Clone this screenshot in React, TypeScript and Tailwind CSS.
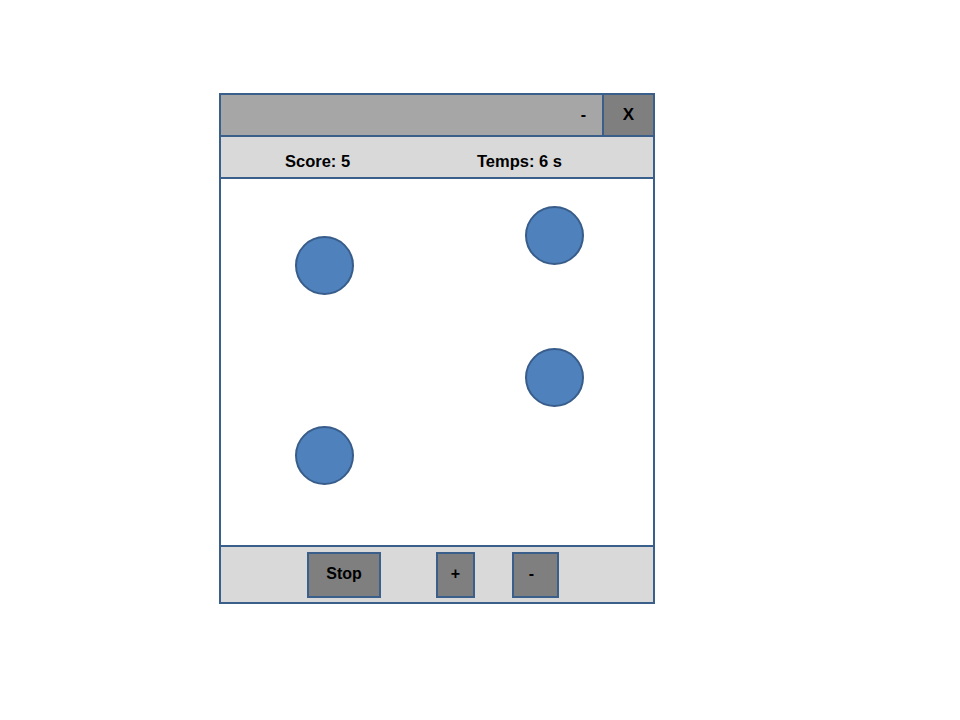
import React from "react";

const circles = [
  { left: 74, top: 57 },
  { left: 304, top: 27 },
  { left: 304, top: 169 },
  { left: 74, top: 247 },
];

export default function App() {
  return (
    <div className="w-[960px] h-[720px] bg-white" style={{ fontFamily: '"Liberation Sans", Arial, sans-serif' }}>
      <div className="pt-[93px] pl-[219px]">
        <div className="w-[436px] border-2 border-[#3a5f8b] flex flex-col font-bold text-[16px] text-black">
          <div className="h-[42px] flex bg-[#a6a6a6] border-b-2 border-[#3a5f8b]">
            <div className="flex-1 flex items-center justify-end pr-[16px]">-</div>
            <div className="w-[51px] bg-[#7f7f7f] border-l-2 border-[#3a5f8b] flex items-center justify-center text-[17px]">X</div>
          </div>
          <div className="h-[42px] flex items-center bg-[#d9d9d9] border-b-2 border-[#3a5f8b] pl-[64px] pt-[8px] text-[16.5px]">
            <span className="w-[192px]">Score: 5</span>
            <span>Temps: 6 s</span>
          </div>
          <div className="relative h-[368px] bg-white border-b-2 border-[#3a5f8b]">
            {circles.map((c, i) => (
              <div
                key={i}
                className="absolute w-[59px] h-[59px] rounded-full bg-[#4f81bd] border-2 border-[#385d8a]"
                style={{ left: c.left, top: c.top }}
              />
            ))}
          </div>
          <div className="h-[55px] bg-[#d9d9d9] flex items-start pt-[5px] pl-[86px]">
            <button className="w-[74px] h-[46px] bg-[#7f7f7f] border-2 border-[#3a5f8b] font-bold text-[16px] pb-[2px]">Stop</button>
            <button className="ml-[55px] w-[39px] h-[46px] bg-[#7f7f7f] border-2 border-[#3a5f8b] font-bold text-[16px] pb-[2px]">+</button>
            <button className="ml-[37px] w-[47px] h-[46px] bg-[#7f7f7f] border-2 border-[#3a5f8b] font-bold text-[16px] pb-[2px] pr-[8px]">-</button>
          </div>
        </div>
      </div>
    </div>
  );
}
